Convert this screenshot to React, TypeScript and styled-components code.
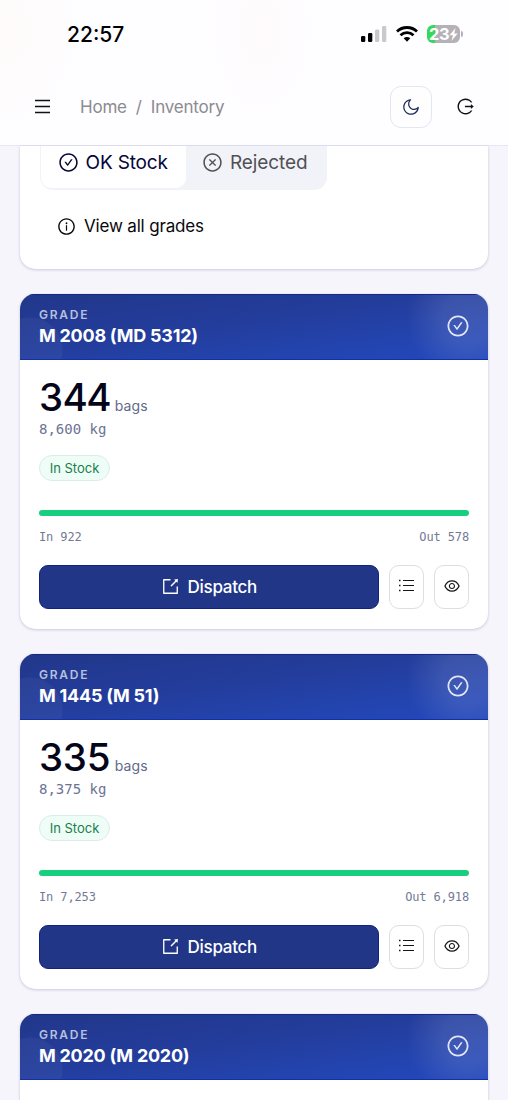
import React from "react";
import styled, { createGlobalStyle } from "styled-components";
import {
  AiOutlineCheckCircle,
  AiOutlineCloseCircle,
  AiOutlineExport,
  AiOutlineEye,
  AiOutlineInfoCircle,
  AiOutlineLogout,
  AiOutlineMoon,
} from "react-icons/ai";

const GlobalStyle = createGlobalStyle`
  *, *::before, *::after { box-sizing: border-box; }
  body {
    margin: 0;
    background: #f6f5fc;
    font-family: Inter, "Liberation Sans", sans-serif;
    color: #05051e;
  }
  button { font-family: inherit; padding: 0; cursor: pointer; }
  svg { display: block; flex: none; }
`;

const Screen = styled.div`
  height: 1100px;
  overflow: hidden;
  display: flex;
  flex-direction: column;
`;

const TopBar = styled.header`
  flex: none;
  height: 146px;
  background:
    radial-gradient(ellipse 90px 110px at 0 30px, #fffbfb, transparent),
    radial-gradient(ellipse 60px 100px at 262px 30px, #fffbfc, transparent),
    #fefdff;
  border-bottom: 1px solid #e6e6f4;
`;

const StatusBar = styled.div`
  height: 68px;
  padding: 0 45px 0 67px;
  display: flex;
  align-items: center;
  justify-content: space-between;
`;

const Clock = styled.span`
  font-size: 21px;
  font-weight: 500;
  color: #000;
  padding-top: 1px;
`;

const Indicators = styled.div`
  display: flex;
  align-items: center;
  gap: 9px;
`;

const Battery = styled.div`
  display: flex;
  align-items: center;
  gap: 1px;
`;

const BatteryBody = styled.div`
  width: 33px;
  height: 18px;
  border-radius: 6px;
  background: linear-gradient(90deg, #33d957 0 8px, #b4b2b6 8px);
  color: #fff;
  font-size: 16.5px;
  line-height: 18px;
  font-weight: 700;
  letter-spacing: -0.4px;
  padding-left: 2px;
  display: flex;
  align-items: center;
`;

const BatteryTip = styled.div`
  width: 2px;
  height: 6px;
  border-radius: 0 2px 2px 0;
  background: #b4b2b6;
`;

const NavBar = styled.nav`
  height: 77px;
  padding: 0 33px;
  display: flex;
  align-items: center;
`;

const MenuButton = styled.button`
  border: 0;
  background: none;
  color: #111;
  display: flex;
`;

const Crumbs = styled.div`
  flex: 1;
  margin-left: 28px;
  display: flex;
  gap: 9px;
  font-size: 17px;
  color: #8b8b90;
  letter-spacing: -0.2px;
`;

const ThemeButton = styled.button`
  width: 42px;
  height: 42px;
  margin-top: 1px;
  border: 1px solid #e2e5f4;
  border-radius: 11px;
  background: #fefeff;
  color: #1e2a5c;
  display: grid;
  place-items: center;
`;

const LogoutButton = styled(MenuButton)`
  margin-left: 24px;
`;

const Content = styled.main`
  flex: 1;
  min-height: 0;
  padding: 0 20px;
`;

const cardShadow = "0 1px 3px rgba(50, 50, 120, 0.2), 0 0 1px rgba(60, 60, 120, 0.22)";

const FilterCard = styled.section`
  height: 122.5px;
  padding: 0 20px;
  margin-bottom: 25.5px;
  background: #fff;
  border-radius: 0 0 15px 15px;
  box-shadow: ${cardShadow};
`;

const Segmented = styled.div`
  display: flex;
  width: 287px;
  height: 44px;
  padding: 0 2px 2px 1px;
  background: #f2f3f9;
  border-radius: 0 0 13px 13px;
`;

const Segment = styled.div<{ $active?: boolean; $width: number }>`
  width: ${(p) => p.$width}px;
  padding: 0 0 10px ${(p) => (p.$active ? 17 : 16)}px;
  display: flex;
  align-items: center;
  gap: ${(p) => (p.$active ? 6.5 : 7)}px;
  font-size: 19px;
  letter-spacing: ${(p) => (p.$active ? -0.15 : -0.1)}px;
  color: ${(p) => (p.$active ? "#05053a" : "#505055")};
  background: ${(p) => (p.$active ? "#fff" : "transparent")};
  border-radius: 0 0 10px 10px;
`;

const ViewAll = styled.button`
  margin: 25px 0 0 17px;
  height: 22px;
  border: 0;
  background: none;
  display: flex;
  align-items: center;
  gap: 8px;
  font-size: 17px;
  letter-spacing: -0.17px;
  color: #08080c;
`;

const GradeCard = styled.article`
  height: 334.5px;
  margin-bottom: 25.5px;
  border-radius: 15px;
  background: #fff;
  box-shadow: ${cardShadow};
  overflow: hidden;
`;

const GradeHeader = styled.div`
  height: 66px;
  padding: 0 18px 2px 19px;
  display: flex;
  align-items: center;
  justify-content: space-between;
  color: rgba(255, 255, 255, 0.85);
  background:
    radial-gradient(circle at 10px 56px, rgba(255, 255, 255, 0.045) 32px, transparent 33px),
    radial-gradient(circle at 448px 24px, rgba(255, 255, 255, 0.12) 0, rgba(255, 255, 255, 0.11) 25px, transparent 62px),
    linear-gradient(172deg, #22378a 0%, #233d9c 45%, #2346b5 85%, #2448ba 100%);
  box-shadow: inset 0 -1px #1231a9, inset 0 1px #142884;
`;

const GradeTitle = styled.div`
  padding-top: 2px;
`;

const GradeLabel = styled.div`
  font-size: 12px;
  line-height: 16px;
  font-weight: 600;
  letter-spacing: 1.75px;
  color: #b8c0df;
`;

const GradeName = styled.h2`
  margin: 1px 0 0;
  font-size: 18px;
  line-height: 24px;
  font-weight: 700;
  color: #fff;
  letter-spacing: -0.25px;
`;

const GradeBody = styled.div`
  padding: 16px 19px 0;
`;

const Quantity = styled.div`
  height: 43px;
  display: flex;
  align-items: baseline;
  gap: 4.5px;
  font-size: 38.5px;
  line-height: 42px;
  font-weight: 550;
  font-variant-numeric: tabular-nums;
  letter-spacing: -1.2px;
  color: #05051a;
`;

const Unit = styled.span`
  font-size: 14px;
  font-weight: 400;
  letter-spacing: 0.1px;
  color: #5f6a8a;
`;

const Weight = styled.div`
  height: 20px;
  font: 14px/20px "DejaVu Sans Mono", monospace;
  color: #6c7493;
`;

const StockBadge = styled.span`
  margin-top: 16px;
  width: 71px;
  height: 26px;
  border: 1px solid #dcebea;
  border-radius: 13px;
  background: #eefdf6;
  display: grid;
  place-items: center;
  font-size: 13px;
  color: #16804d;
`;

const StockBar = styled.div`
  margin-top: 29px;
  height: 6px;
  border-radius: 3px;
  background: #18cf80;
`;

const Flow = styled.div`
  margin-top: 12px;
  height: 18px;
  display: flex;
  justify-content: space-between;
  font: 12px/18px "DejaVu Sans Mono", monospace;
  letter-spacing: -0.13px;
  color: #747a96;
`;

const Actions = styled.div`
  margin-top: 19px;
  height: 44px;
  display: flex;
  gap: 10px;
`;

const DispatchButton = styled.button`
  flex: 1;
  border: 1px solid #10227f;
  border-radius: 9px;
  background: #213687;
  color: #fff;
  display: flex;
  align-items: center;
  justify-content: center;
  gap: 7.5px;
  font-size: 17px;
  font-weight: 500;
  letter-spacing: -0.3px;

  svg {
    margin-bottom: 2px;
  }
`;

const IconButton = styled.button`
  width: 35px;
  border: 1px solid #dedee0;
  border-radius: 10px;
  background: #fff;
  color: #161618;
  display: grid;
  place-items: center;
  padding-bottom: 2px;
`;

const SignalIcon = () => (
  <svg width="26" height="16" viewBox="0 0 26 16">
    <rect x="0" y="10" width="4.3" height="6" rx="1.2" fill="#000" />
    <rect x="7" y="7" width="4.3" height="9" rx="1.2" fill="#000" />
    <rect x="14" y="3.5" width="4.3" height="12.5" rx="1.2" fill="#c9c8cb" />
    <rect x="21" y="0" width="4.3" height="16" rx="1.2" fill="#c9c8cb" />
  </svg>
);

const WifiIcon = () => (
  <svg width="22" height="16" viewBox="0 0 22 16" fill="none" stroke="#000" strokeWidth="2.8">
    <path d="M1 5.4C6.5 .2 15.5 .2 21 5.4" />
    <path d="M4.5 9.3C8.2 5.8 13.8 5.8 17.5 9.3" />
    <path d="M7.7 12.3C9.5 10.7 12.5 10.7 14.3 12.3L11 15.8Z" fill="#000" stroke="none" />
  </svg>
);

const BoltIcon = () => (
  <svg width="9" height="13" viewBox="0 0 9 13" fill="#fff">
    <path d="M6.5 0L.5 7.2H4L2.5 13L8.7 5.4H5.2Z" />
  </svg>
);

const MenuIcon = () => (
  <svg width="19" height="18" viewBox="0 0 19 18" stroke="currentColor" strokeWidth="1.3">
    <path d="M2 2.5H17M2 8.5H17M2 14.5H17" />
  </svg>
);

const ListIcon = () => (
  <svg width="17" height="14" viewBox="0 0 17 14" stroke="currentColor" strokeWidth="1.2">
    <path d="M5 1.5H16M5 6.500H16M5 11.5H16" />
    <path d="M1 1.5H2.500M1 6.5H2.5M1 11.5H2.5" strokeWidth="1.5" />
  </svg>
);

const grades = [
  { name: "M 2008 (MD 5312)", bags: "344", kg: "8,600", inn: "922", out: "578" },
  { name: "M 1445 (M 51)", bags: "335", kg: "8,375", inn: "7,253", out: "6,918" },
  { name: "M 2020 (M 2020)" },
];

export default function App() {
  return (
    <Screen>
      <GlobalStyle />
      <TopBar>
        <StatusBar>
          <Clock>22:57</Clock>
          <Indicators>
            <SignalIcon />
            <WifiIcon />
            <Battery>
              <BatteryBody>
                23
                <BoltIcon />
              </BatteryBody>
              <BatteryTip />
            </Battery>
          </Indicators>
        </StatusBar>
        <NavBar>
          <MenuButton aria-label="Menu">
            <MenuIcon />
          </MenuButton>
          <Crumbs>
            <span>Home</span>
            <span>/</span>
            <span>Inventory</span>
          </Crumbs>
          <ThemeButton aria-label="Theme">
            <AiOutlineMoon size={20} />
          </ThemeButton>
          <LogoutButton aria-label="Log out">
            <AiOutlineLogout size={19} />
          </LogoutButton>
        </NavBar>
      </TopBar>
      <Content>
        <FilterCard>
          <Segmented>
            <Segment $active $width={145}>
              <AiOutlineCheckCircle size={21} />
              OK Stock
            </Segment>
            <Segment $width={139}>
              <AiOutlineCloseCircle size={21} />
              Rejected
            </Segment>
          </Segmented>
          <ViewAll>
            <AiOutlineInfoCircle size={19} />
            View all grades
          </ViewAll>
        </FilterCard>
        {grades.map((g) => (
          <GradeCard key={g.name}>
            <GradeHeader>
              <GradeTitle>
                <GradeLabel>GRADE</GradeLabel>
                <GradeName>{g.name}</GradeName>
              </GradeTitle>
              <AiOutlineCheckCircle size={24} />
            </GradeHeader>
            {g.bags && (
              <GradeBody>
                <Quantity>
                  {g.bags}
                  <Unit>bags</Unit>
                </Quantity>
                <Weight>{g.kg} kg</Weight>
                <StockBadge>In Stock</StockBadge>
                <StockBar />
                <Flow>
                  <span>In {g.inn}</span>
                  <span>Out {g.out}</span>
                </Flow>
                <Actions>
                  <DispatchButton>
                    <AiOutlineExport size={19} />
                    Dispatch
                  </DispatchButton>
                  <IconButton aria-label="List">
                    <ListIcon />
                  </IconButton>
                  <IconButton aria-label="View">
                    <AiOutlineEye size={18} />
                  </IconButton>
                </Actions>
              </GradeBody>
            )}
          </GradeCard>
        ))}
      </Content>
    </Screen>
  );
}
